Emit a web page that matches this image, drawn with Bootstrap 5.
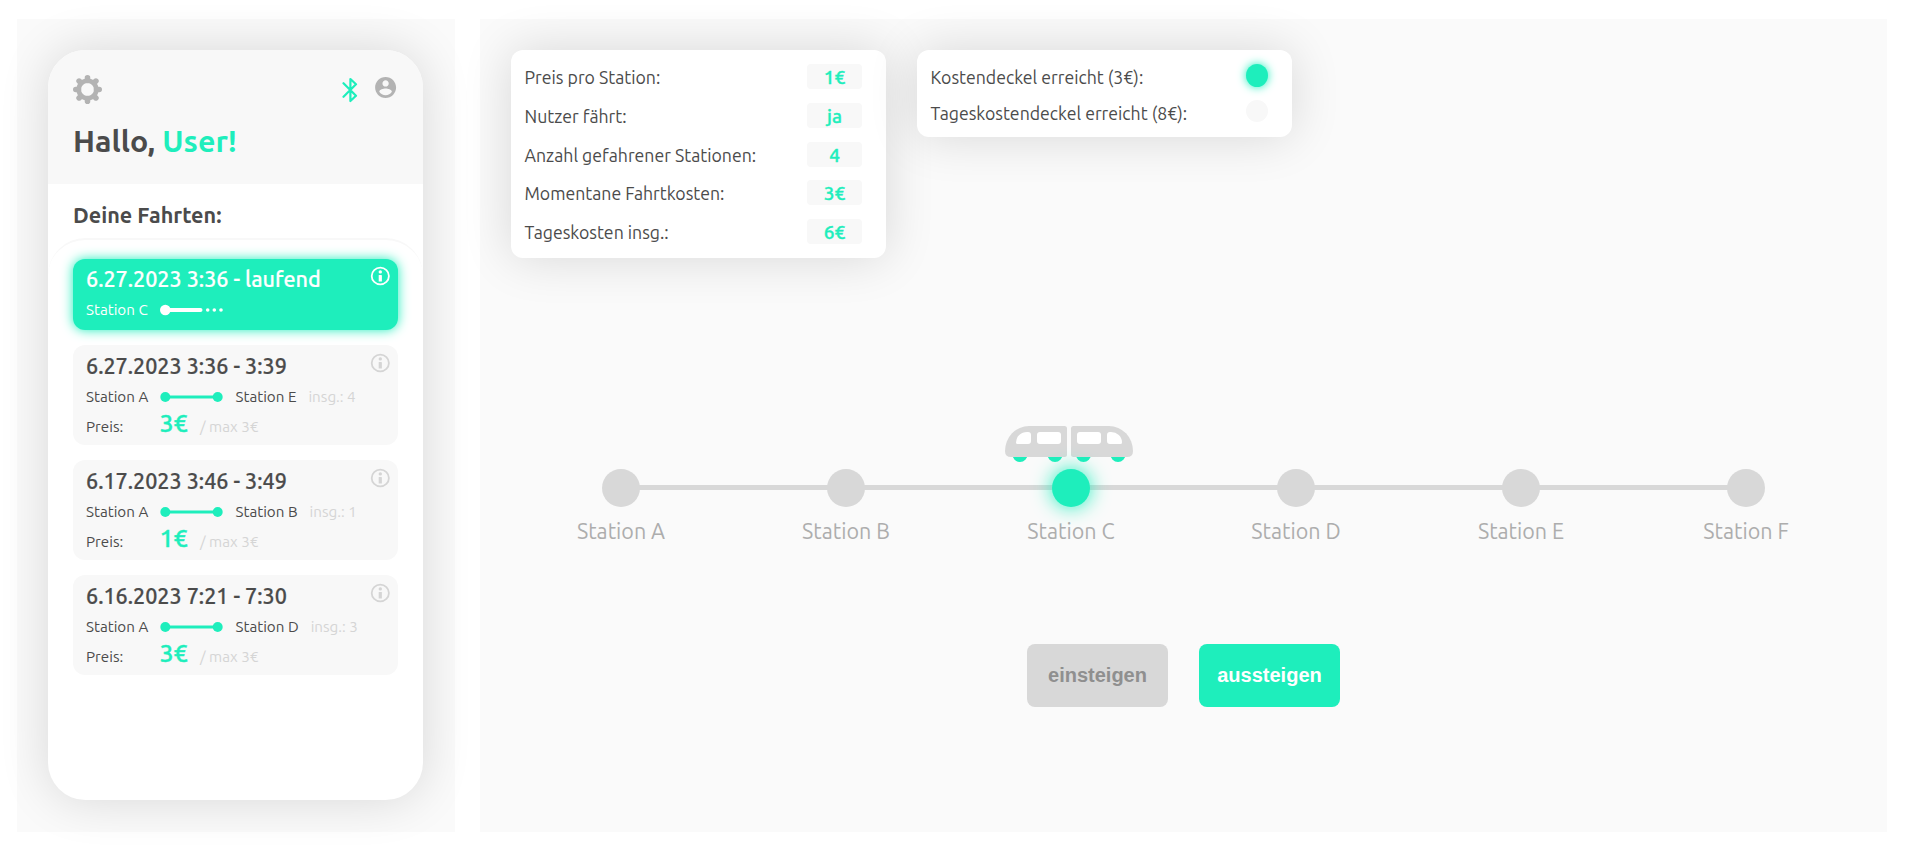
<!DOCTYPE html>
<html lang="de">
<head>
<meta charset="utf-8">
<meta name="viewport" content="width=device-width, initial-scale=1">
<title>Fahrten</title>
<link href="https://cdn.jsdelivr.net/npm/bootstrap@5.3.0/dist/css/bootstrap.min.css" rel="stylesheet">
<style>
:root{--mint:#1eeebc;--ink:#4b4b4b;--soft:#d8d8d8;--tile:#f8f8f8}
body{background:#fff;color:var(--ink);font-family:Ubuntu,"Noto Sans","Open Sans",sans-serif;height:851px;overflow:hidden}
.page{padding:19px 18px 19px 17px;gap:25px;height:851px}
.side{width:438px;background:#fafafa;padding:31px}
.stage{background:#fafafa;padding:31px 0 0 31px}
.lift{box-shadow:0 0 50px rgba(0,0,0,.14);background:#fff}
.phone{width:375px;height:750px;border-radius:37.5px}
.head{height:134px;background:var(--tile);padding:25px 25px 0}
.tools{height:29px}
.tool-bt{margin:1px 15px 0 auto}
.tool-user{margin:0 0 4px 0}
.hello{font-size:30.4px;font-weight:700;line-height:34px;margin-top:20px}
.mint{color:var(--mint)}
.sub{font-size:21.6px;font-weight:700;height:54px;padding:18px 25px 0;line-height:27px}
.rides{border-top:2px solid var(--tile);border-radius:37.5px 37.5px 0 0;padding:19px 25px;gap:15px;height:562px}
.ride{height:100px;border-radius:12px;background:var(--tile);padding:8px 8px 0 13px}
.ride.on{height:71px;padding-top:7px;background:var(--mint);color:#fff;box-shadow:0 0 12px var(--mint)}
.ttl{font-size:21.55px;font-weight:500;line-height:26px;height:34px;-webkit-text-stroke:.2px}
.ln{font-size:15.2px;line-height:20px;white-space:nowrap}
.ln-price{line-height:28px;margin-top:1px}
.pale{color:#d5d5d5}
.from{width:74px}
.from-price{width:73.5px}
.price{font-size:25px;font-weight:500;color:var(--mint);width:40.5px;margin-top:1px;margin-bottom:-1px;-webkit-text-stroke:.4px}
.info{color:#d5d5d5}
.on .info{color:#fff}
.cards{gap:31px;height:208px}
.stats{width:375px;border-radius:12px;padding:14px 24px 0 13.5px;font-size:17.7px}
.stat{height:25px;line-height:27px;margin-bottom:13.8px}
.val{width:55px;height:25px;border-radius:4px;background:var(--tile);font-weight:500;font-size:19px;color:var(--mint);line-height:26px;-webkit-text-stroke:.4px}
.caps{height:87px;padding-right:24px}
.cap{height:22px;line-height:27px;margin-bottom:14px}
.lamp{width:22px;height:22px;border-radius:50%;background:var(--tile)}
.lamp.lit{background:var(--mint);box-shadow:0 0 10px var(--mint);height:23px}
.route{width:1350px;margin:168px 0 0 -2.5px}
.train{height:43px}
.train svg{margin-left:496.5px}
.stop{width:225px}
.node{height:38px}
.node::before{content:"";height:5px;background:var(--soft);position:absolute;left:0;right:0;top:16px}
.stop:first-child .node::before{left:50%}
.stop:last-child .node::before{right:50%}
.dot{width:38px;height:38px;border-radius:50%;background:var(--soft);position:relative}
.stop.here .dot{background:var(--mint);box-shadow:0 0 20px var(--mint)}
.stop.here{z-index:1}
.name{font-size:21.5px;color:#adadad;line-height:26px;margin-top:11px}
.acts{gap:31px;margin:100px 0 0 516px}
.act{width:141px;height:63px;border:0;border-radius:8px;font:700 20px "Liberation Sans",Arial,sans-serif;padding:0}
.act-in{background:var(--soft);color:#8f8f8f}
.act-out{background:var(--mint);color:#fff}
</style>
</head>
<body>
<svg width="0" height="0" class="position-absolute" aria-hidden="true">
  <symbol id="i-info" viewBox="0 0 20 20"><ellipse cx="10.3" cy="10" rx="8.6" ry="8.3" fill="none" stroke="currentColor" stroke-width="1.8"/><circle cx="10.3" cy="5.9" r="1.7" fill="currentColor"/><rect x="8.7" y="9" width="3.2" height="6.6" rx=".4" fill="currentColor"/></symbol>
  <symbol id="i-trip" viewBox="0 0 63 12"><path d="M5 6H58" stroke="#1eeebc" stroke-width="3.2"/><circle cx="5.3" cy="6" r="5" fill="#1eeebc"/><circle cx="57.7" cy="6" r="5" fill="#1eeebc"/></symbol>
</svg>
<div class="page d-flex">
  <aside class="side flex-shrink-0">
    <div class="phone lift overflow-hidden">
      <header class="head">
        <div class="tools d-flex align-items-center">
          <svg width="29" height="29" viewBox="-14.5 -14.5 29 29"><g stroke="#b3b3b3" stroke-width="5.6" stroke-linecap="round"><path d="M0-11.7V-9M0 11.7V9M-11.7 0H-9M11.7 0H9M-8.4-8.4L-7-7M8.4 8.4L7 7M8.4-8.4L7-7M-8.4 8.4L-7 7"/></g><circle r="8.8" fill="none" stroke="#b3b3b3" stroke-width="4.6"/></svg>
          <svg class="tool-bt" width="16" height="26" viewBox="0 0 16 26"><path d="M1.5 6.2L14 18.8L8.4 24V2L14 7.2L1.5 19.8" fill="none" stroke="#1eeebc" stroke-width="2.2" stroke-linecap="round" stroke-linejoin="round"/></svg>
          <svg class="tool-user" width="25.2" height="25.2" viewBox="0 0 24 24" fill="#b3b3b3"><path d="M12 2C6.48 2 2 6.48 2 12s4.48 10 10 10 10-4.48 10-10S17.52 2 12 2zm0 3c1.66 0 3 1.34 3 3s-1.34 3-3 3-3-1.34-3-3 1.34-3 3-3zm0 14.2c-2.5 0-4.71-1.28-6-3.22.03-1.99 4-3.08 6-3.08 1.99 0 5.97 1.09 6 3.08-1.29 1.94-3.5 3.22-6 3.22z"/></svg>
        </div>
        <div class="hello">Hallo, <span class="mint">User!</span></div>
      </header>
      <div class="sub">Deine Fahrten:</div>
      <div class="rides d-flex flex-column">
        <div class="ride on">
          <div class="ttl d-flex justify-content-between"><span>6.27.2023 3:36 - laufend</span><svg class="info" width="20" height="20"><use href="#i-info"/></svg></div>
          <div class="ln d-flex align-items-center"><span class="from">Station C</span><svg width="64" height="12" viewBox="0 0 64 12" fill="#fff"><circle cx="5.3" cy="6" r="5.3"/><path d="M6 6H40.5" stroke="#fff" stroke-width="4" stroke-linecap="round"/><circle cx="47.7" cy="6" r="1.8"/><circle cx="54.3" cy="6" r="1.8"/><circle cx="61" cy="6" r="1.8"/></svg></div>
        </div>
        <div class="ride">
          <div class="ttl d-flex justify-content-between"><span>6.27.2023 3:36 - 3:39</span><svg class="info" width="20" height="20"><use href="#i-info"/></svg></div>
          <div class="ln d-flex align-items-center"><span class="from">Station A</span><svg width="63.5" height="12" viewBox="0 0 63.5 12"><use href="#i-trip" width="63" height="12"/></svg><span class="ms-2 ps-1">Station E</span><span class="pale ms-2 ps-1">insg.: 4</span></div>
          <div class="ln ln-price d-flex align-items-baseline"><span class="from-price">Preis:</span><span class="price">3€</span><span class="pale">/ max 3€</span></div>
        </div>
        <div class="ride">
          <div class="ttl d-flex justify-content-between"><span>6.17.2023 3:46 - 3:49</span><svg class="info" width="20" height="20"><use href="#i-info"/></svg></div>
          <div class="ln d-flex align-items-center"><span class="from">Station A</span><svg width="63.5" height="12" viewBox="0 0 63.5 12"><use href="#i-trip" width="63" height="12"/></svg><span class="ms-2 ps-1">Station B</span><span class="pale ms-2 ps-1">insg.: 1</span></div>
          <div class="ln ln-price d-flex align-items-baseline"><span class="from-price">Preis:</span><span class="price">1€</span><span class="pale">/ max 3€</span></div>
        </div>
        <div class="ride">
          <div class="ttl d-flex justify-content-between"><span>6.16.2023 7:21 - 7:30</span><svg class="info" width="20" height="20"><use href="#i-info"/></svg></div>
          <div class="ln d-flex align-items-center"><span class="from">Station A</span><svg width="63.5" height="12" viewBox="0 0 63.5 12"><use href="#i-trip" width="63" height="12"/></svg><span class="ms-2 ps-1">Station D</span><span class="pale ms-2 ps-1">insg.: 3</span></div>
          <div class="ln ln-price d-flex align-items-baseline"><span class="from-price">Preis:</span><span class="price">3€</span><span class="pale">/ max 3€</span></div>
        </div>
      </div>
    </div>
  </aside>
  <main class="stage flex-grow-1">
    <div class="cards d-flex align-items-start">
      <div class="stats lift h-100">
        <div class="stat d-flex justify-content-between"><span>Preis pro Station:</span><span class="val text-center">1€</span></div>
        <div class="stat d-flex justify-content-between"><span>Nutzer fährt:</span><span class="val text-center">ja</span></div>
        <div class="stat d-flex justify-content-between"><span>Anzahl gefahrener Stationen:</span><span class="val text-center">4</span></div>
        <div class="stat d-flex justify-content-between"><span>Momentane Fahrtkosten:</span><span class="val text-center">3€</span></div>
        <div class="stat d-flex justify-content-between"><span>Tageskosten insg.:</span><span class="val text-center">6€</span></div>
      </div>
      <div class="stats caps lift">
        <div class="cap d-flex justify-content-between"><span>Kostendeckel erreicht (3€):</span><span class="lamp lit"></span></div>
        <div class="cap d-flex justify-content-between"><span>Tageskostendeckel erreicht (8€):</span><span class="lamp"></span></div>
      </div>
    </div>
    <div class="route">
      <div class="train d-flex">
        <svg width="128" height="37" viewBox="0 0 128 37"><g fill="#1eeebc"><circle cx="15" cy="28.5" r="7.6"/><circle cx="50" cy="28.5" r="7.6"/><circle cx="78.5" cy="28.5" r="7.6"/><circle cx="113" cy="28.5" r="7.6"/></g><g id="car"><path d="M24 0H59.5Q62 0 62 2.5V28.5Q62 31 59.5 31H6Q0 31 0 25A24 25 0 0 1 24 0Z" fill="#d8d8d8"/><path d="M22 6H23Q26 6 26 9V15Q26 18 23 18H12.5Q11 18 11 16.5A11 10.5 0 0 1 22 6Z" fill="#fff"/><rect x="32" y="6" width="24" height="12" rx="3" fill="#fff"/></g><use href="#car" transform="matrix(-1 0 0 1 128 0)"/></svg>
      </div>
      <div class="d-flex">
        <div class="stop"><div class="node position-relative d-flex justify-content-center"><span class="dot"></span></div><div class="name text-center">Station A</div></div>
        <div class="stop"><div class="node position-relative d-flex justify-content-center"><span class="dot"></span></div><div class="name text-center">Station B</div></div>
        <div class="stop here"><div class="node position-relative d-flex justify-content-center"><span class="dot"></span></div><div class="name text-center">Station C</div></div>
        <div class="stop"><div class="node position-relative d-flex justify-content-center"><span class="dot"></span></div><div class="name text-center">Station D</div></div>
        <div class="stop"><div class="node position-relative d-flex justify-content-center"><span class="dot"></span></div><div class="name text-center">Station E</div></div>
        <div class="stop"><div class="node position-relative d-flex justify-content-center"><span class="dot"></span></div><div class="name text-center">Station F</div></div>
      </div>
    </div>
    <div class="acts d-flex">
      <button class="act act-in" type="button">einsteigen</button>
      <button class="act act-out" type="button">aussteigen</button>
    </div>
  </main>
</div>
<script src="https://cdn.jsdelivr.net/npm/bootstrap@5.3.0/dist/js/bootstrap.bundle.min.js"></script>
</body>
</html>
